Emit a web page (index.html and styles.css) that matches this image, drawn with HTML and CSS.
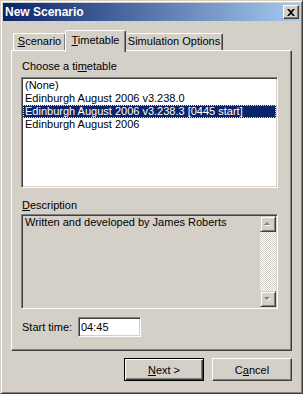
FILE: index.html
```html
<!DOCTYPE html>
<html lang="en">
<head>
    <meta charset="UTF-8">
    <meta name="viewport" content="width=device-width, initial-scale=1.0">
    <title>New Scenario</title>
    <link rel="stylesheet" href="styles.css">
</head>
<body>
    <div class="window">
        <div class="titlebar">
            <span class="title">New Scenario</span>
            <button class="close-btn" type="button" aria-label="Close">
                <svg width="8" height="7" viewBox="0 0 8 7">
                    <path d="M0 0h2l2 2 2-2h2L5 3.5 8 7H6L4 5 2 7H0l3-3.5z" fill="#000"/>
                </svg>
            </button>
        </div>
        <div class="dialog-body">
            <div class="tabs">
                <div class="tab tab-scenario"><u>S</u>cenario</div>
                <div class="tab tab-timetable active"><u>T</u>imetable</div>
                <div class="tab tab-sim">Simulation Options</div>
            </div>
            <div class="pane">
                <div class="field-label">Choose a ti<u>m</u>etable</div>
                <ul class="listbox">
                    <li>(None)</li>
                    <li>Edinburgh August 2006 v3.238.0</li>
                    <li class="selected">Edinburgh August 2006 v3.238.3 [0445 start]</li>
                    <li>Edinburgh August 2006</li>
                </ul>
                <div class="field-label desc-label"><u>D</u>escription</div>
                <div class="memo">
                    <div class="memo-text">Written and developed by James Roberts</div>
                    <div class="scrollbar">
                        <div class="scroll-btn">
                            <svg width="8" height="5" viewBox="0 0 8 5">
                                <path d="M4 1 7 4H1z" fill="#fff"/>
                                <path d="M3 0 6 3H0z" fill="#808080"/>
                            </svg>
                        </div>
                        <div class="scroll-track"></div>
                        <div class="scroll-btn">
                            <svg width="8" height="5" viewBox="0 0 8 5">
                                <path d="M1 1h6L4 4z" fill="#fff"/>
                                <path d="M0 0h6L3 3z" fill="#808080"/>
                            </svg>
                        </div>
                    </div>
                </div>
                <div class="time-row">
                    <span class="time-label">Start time:</span>
                    <input class="textbox" type="text" value="04:45">
                </div>
            </div>
            <div class="buttons">
                <button class="btn default" type="button"><u>N</u>ext &gt;</button>
                <button class="btn" type="button">C<u>a</u>ncel</button>
            </div>
        </div>
    </div>
</body>
</html>
```

FILE: styles.css
```css
body {
    margin: 0;
    padding: 0;
    font-family: "Liberation Sans", Arial, sans-serif;
    font-size: 11px;
    color: #000;
    background-color: #d4d0c8;
}
.window {
    box-sizing: border-box;
    width: 303px;
    height: 394px;
    padding: 2px;
    background-color: #d4d0c8;
    border: 1px solid;
    border-color: #d4d0c8 #404040 #404040 #d4d0c8;
    box-shadow: inset 1px 1px #fff, inset -1px -1px #808080;
    display: flex;
    flex-direction: column;
}
.titlebar {
    height: 18px;
    display: flex;
    align-items: center;
    justify-content: space-between;
    background: linear-gradient(to right, #0a246a, #a6caf0);
    padding-left: 2px;
}
.title {
    color: #fff;
    font-weight: bold;
    font-size: 12px;
}
.close-btn {
    box-sizing: border-box;
    width: 16px;
    height: 14px;
    margin-right: 1px;
    padding: 0;
    display: flex;
    align-items: center;
    justify-content: center;
    background-color: #d4d0c8;
    border: 1px solid;
    border-color: #fff #404040 #404040 #fff;
    box-shadow: inset -1px -1px #808080;
}
.dialog-body {
    padding: 9px 7px 0 8px;
}
.tabs {
    display: flex;
    align-items: flex-end;
    padding-left: 2px;
    height: 20px;
}
.tab {
    box-sizing: border-box;
    height: 17px;
    line-height: 15px;
    text-align: center;
    background-color: #d4d0c8;
    border-top: 1px solid #fff;
    border-left: 1px solid #fff;
    border-right: 1px solid #404040;
    border-radius: 2px 2px 0 0;
    box-shadow: inset -1px 0 #808080;
}
.tab-scenario {
    width: 53px;
}
.tab-timetable {
    width: 61px;
}
.tab-sim {
    width: 97px;
    border-left: none;
}
.tab.active {
    position: relative;
    z-index: 1;
    height: 22px;
    margin-bottom: -2px;
    line-height: 18px;
    margin-left: -1px;
}
.pane {
    box-sizing: border-box;
    width: 281px;
    height: 301px;
    padding: 9px 11px 0 9px;
    border: 1px solid;
    border-color: #fff #404040 #404040 #fff;
    box-shadow: inset -1px -1px #808080;
}
.field-label {
    height: 13px;
    line-height: 13px;
    padding-left: 1px;
    margin-bottom: 4px;
}
.desc-label {
    margin-top: 11px;
    margin-bottom: 2px;
}
.listbox {
    box-sizing: border-box;
    list-style: none;
    margin: 0;
    width: 257px;
    height: 111px;
    background-color: #fff;
    border: 1px solid;
    border-color: #808080 #fff #fff #808080;
    box-shadow: inset 1px 1px #404040, inset -1px -1px #d4d0c8;
    padding: 1px;
}
.listbox li {
    height: 13px;
    line-height: 13px;
    padding-left: 2px;
    white-space: nowrap;
}
.listbox li.selected {
    background-color: #0a246a;
    color: #fff;
    outline: 1px dotted #f5db95;
    outline-offset: -1px;
}
.memo {
    box-sizing: border-box;
    width: 257px;
    height: 95px;
    display: flex;
    padding: 1px;
    border: 1px solid;
    border-color: #808080 #fff #fff #808080;
    box-shadow: inset 1px 1px #404040, inset -1px -1px #d4d0c8;
}
.memo-text {
    flex: 1;
    padding: 0 2px;
    line-height: 13px;
}
.scrollbar {
    width: 16px;
    display: flex;
    flex-direction: column;
}
.scroll-btn {
    box-sizing: border-box;
    width: 16px;
    height: 16px;
    display: flex;
    align-items: center;
    justify-content: center;
    background-color: #d4d0c8;
    border: 1px solid;
    border-color: #d4d0c8 #404040 #404040 #d4d0c8;
    box-shadow: inset 1px 1px #fff, inset -1px -1px #808080;
}
.scroll-track {
    flex: 1;
    background: repeating-conic-gradient(#fff 0 25%, #d4d0c8 0 50%) 0 0 / 2px 2px;
}
.time-row {
    display: flex;
    align-items: center;
    margin-top: 8px;
}
.time-label {
    width: 56px;
    padding-left: 1px;
}
.textbox {
    box-sizing: border-box;
    width: 63px;
    height: 20px;
    margin: 0;
    padding: 0 2px;
    font: inherit;
    color: #000;
    background-color: #fff;
    border: 1px solid;
    border-color: #808080 #fff #fff #808080;
    box-shadow: inset 1px 1px #404040, inset -1px -1px #d4d0c8;
    outline: none;
}
.buttons {
    display: flex;
    justify-content: flex-end;
    gap: 8px;
    margin-top: 7px;
    padding-right: 1px;
}
.btn {
    box-sizing: border-box;
    width: 80px;
    height: 23px;
    padding: 0;
    font: inherit;
    color: #000;
    background-color: #d4d0c8;
    border: 1px solid;
    border-color: #fff #404040 #404040 #fff;
    box-shadow: inset -1px -1px #808080;
}
.btn.default {
    border: 1px solid #000;
    box-shadow: inset 1px 1px #fff, inset -1px -1px #404040, inset -2px -2px #808080;
}
```
